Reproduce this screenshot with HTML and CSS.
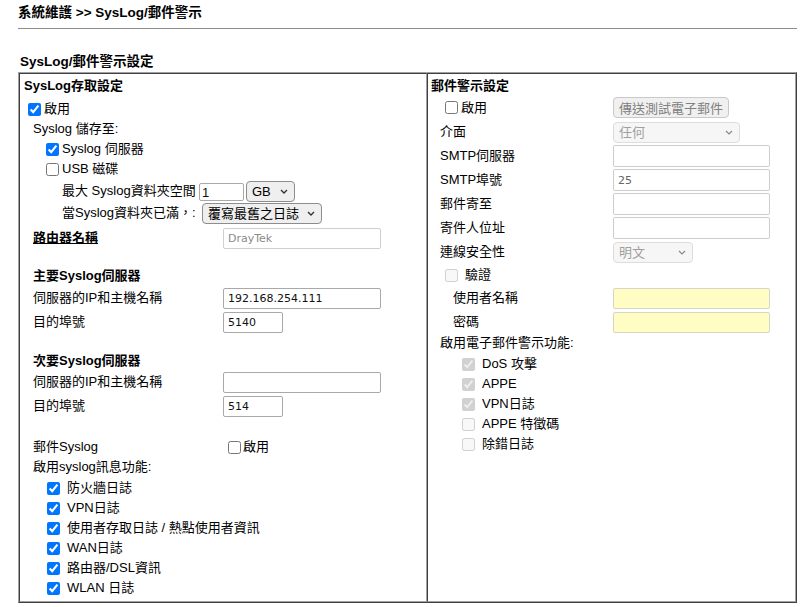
FILE: index.html
```html
<!DOCTYPE html>
<html lang="zh-Hant">
<head>
<meta charset="utf-8">
<title>SysLog/郵件警示</title>
<link rel="stylesheet" href="styles.css">
</head>
<body>
<div class="page">
  <div class="crumb">系統維護 &gt;&gt; SysLog/郵件警示</div>
  <div class="rule"></div>
  <div class="sect-title">SysLog/郵件警示設定</div>
  <div class="panel">
    <div class="cell cell-left">
      <div class="row h mt2">SysLog存取設定</div>
      <div class="row mt3"><input type="checkbox" class="cb" checked>啟用</div>
      <div class="row ind9">Syslog 儲存至:</div>
      <div class="row ind18"><input type="checkbox" class="cb" checked>Syslog 伺服器</div>
      <div class="row ind18"><input type="checkbox" class="cb">USB 磁碟</div>
      <div class="row tall mt1 ind38">
        <span class="lbl-max">最大 Syslog資料夾空間</span>
        <input type="text" class="in in-small" value="1">
        <span class="sel sel-gb"><select class="s"><option>GB</option></select><svg class="chev" width="8" height="5" viewBox="0 0 8 5"><polyline points="1,1 4,4 7,1" fill="none" stroke="#333" stroke-width="1.4"/></svg></span>
      </div>
      <div class="row tall ind38">
        <span class="lbl-full">當Syslog資料夾已滿，:</span>
        <span class="sel sel-over"><select class="s"><option>覆寫最舊之日誌</option></select><svg class="chev" width="8" height="5" viewBox="0 0 8 5"><polyline points="1,1 4,4 7,1" fill="none" stroke="#333" stroke-width="1.4"/></svg></span>
      </div>
      <div class="row tall mt3 ind9">
        <span class="lbl h u">路由器名稱</span>
        <input type="text" class="in in-wide in-dis" value="DrayTek" disabled>
      </div>
      <div class="row h mt17 ind9">主要Syslog伺服器</div>
      <div class="row tall mt1 ind9">
        <span class="lbl">伺服器的IP和主機名稱</span>
        <input type="text" class="in in-wide" value="192.168.254.111">
      </div>
      <div class="row tall mt2 ind9">
        <span class="lbl">目的埠號</span>
        <input type="text" class="in in-port" value="5140">
      </div>
      <div class="row h mt18 ind9">次要Syslog伺服器</div>
      <div class="row tall ind9">
        <span class="lbl">伺服器的IP和主機名稱</span>
        <input type="text" class="in in-wide" value="">
      </div>
      <div class="row tall mt2 ind9">
        <span class="lbl">目的埠號</span>
        <input type="text" class="in in-port" value="514">
      </div>
      <div class="row mt20 ind9">
        <span class="lbl">郵件Syslog</span>
        <input type="checkbox" class="cb cb-mail">啟用
      </div>
      <div class="row ind9">啟用syslog訊息功能:</div>
      <div class="row mt1 ind19"><input type="checkbox" class="cb cb-gap" checked>防火牆日誌</div>
      <div class="row ind19"><input type="checkbox" class="cb cb-gap" checked>VPN日誌</div>
      <div class="row ind19"><input type="checkbox" class="cb cb-gap" checked>使用者存取日誌 / 熱點使用者資訊</div>
      <div class="row ind19"><input type="checkbox" class="cb cb-gap" checked>WAN日誌</div>
      <div class="row ind19"><input type="checkbox" class="cb cb-gap" checked>路由器/DSL資訊</div>
      <div class="row ind19"><input type="checkbox" class="cb cb-gap" checked>WLAN 日誌</div>
    </div>
    <div class="cell cell-right">
      <div class="row h mt2">郵件警示設定</div>
      <div class="row row21 mt1 ind10">
        <span class="lbl-en"><input type="checkbox" class="cb">啟用</span>
        <button class="btn" type="button" disabled>傳送測試電子郵件</button>
      </div>
      <div class="row tall mt3 ind9">
        <span class="rlbl">介面</span>
        <span class="sel sel-if dis"><select class="s" disabled><option>任何</option></select><svg class="chev" width="8" height="5" viewBox="0 0 8 5"><polyline points="1,1 4,4 7,1" fill="none" stroke="#888" stroke-width="1.2"/></svg></span>
      </div>
      <div class="row tall mt2 ind9">
        <span class="rlbl">SMTP伺服器</span>
        <input type="text" class="in in-r" value="">
      </div>
      <div class="row tall mt2 ind9">
        <span class="rlbl">SMTP埠號</span>
        <input type="text" class="in in-r in-grey" value="25">
      </div>
      <div class="row tall mt2 ind9">
        <span class="rlbl">郵件寄至</span>
        <input type="text" class="in in-r" value="">
      </div>
      <div class="row tall mt2 ind9">
        <span class="rlbl">寄件人位址</span>
        <input type="text" class="in in-r" value="">
      </div>
      <div class="row tall mt2 ind9">
        <span class="rlbl">連線安全性</span>
        <span class="sel sel-sec dis"><select class="s" disabled><option>明文</option></select><svg class="chev" width="8" height="5" viewBox="0 0 8 5"><polyline points="1,1 4,4 7,1" fill="none" stroke="#888" stroke-width="1.2"/></svg></span>
      </div>
      <div class="row mt2 ind10"><input type="checkbox" class="cb cb-gap" disabled>驗證</div>
      <div class="row tall mt2 ind22">
        <span class="rlbl2">使用者名稱</span>
        <input type="text" class="in in-r in-yel" value="">
      </div>
      <div class="row tall mt2 ind22">
        <span class="rlbl2">密碼</span>
        <input type="password" class="in in-r in-yel" value="">
      </div>
      <div class="row ind9">啟用電子郵件警示功能:</div>
      <div class="row mt1 ind27"><input type="checkbox" class="cb cb-gap" checked disabled>DoS 攻擊</div>
      <div class="row ind27"><input type="checkbox" class="cb cb-gap" checked disabled>APPE</div>
      <div class="row ind27"><input type="checkbox" class="cb cb-gap" checked disabled>VPN日誌</div>
      <div class="row ind27"><input type="checkbox" class="cb cb-gap" disabled>APPE 特徵碼</div>
      <div class="row ind27"><input type="checkbox" class="cb cb-gap" disabled>除錯日誌</div>
    </div>
  </div>
</div>
</body>
</html>
```
FILE: styles.css
```css
body {
  margin: 0;
  font-family: "Liberation Sans", "Noto Sans CJK TC", sans-serif;
  font-size: 13px;
  color: #000;
  background: #fff;
}

.page {
  width: 779px;
  margin-left: 18px;
}

.crumb {
  height: 28px;
  line-height: 26px;
  font-weight: bold;
  font-size: 13.5px;
}

.rule {
  height: 1px;
  background: #8c8c8c;
}

.sect-title {
  margin-top: 23px;
  height: 20px;
  line-height: 20px;
  padding-left: 2px;
  font-weight: bold;
  font-size: 13.5px;
}

.panel {
  display: grid;
  grid-template-columns: 408px 369px;
  border: 1px solid;
  border-color: #a0a0a0 #404040 #404040 #a0a0a0;
}

.cell {
  border: 1px solid;
  border-color: #404040 #a0a0a0 #a0a0a0 #404040;
  padding: 0 0 3px 4px;
}

.cell-right {
  padding-left: 3px;
}

.row {
  display: flex;
  align-items: center;
  height: 20px;
  line-height: 20px;
  white-space: nowrap;
}

.row.tall { height: 22px; }
.row.row21 { height: 21px; }

.h { font-weight: bold; }
.u { text-decoration: underline; }

.mt1 { margin-top: 1px; }
.mt2 { margin-top: 2px; }
.mt3 { margin-top: 3px; }
.mt17 { margin-top: 17px; }
.mt18 { margin-top: 18px; }
.mt20 { margin-top: 20px; }

.ind9 { padding-left: 9px; }
.ind10 { padding-left: 10px; }
.ind18 { padding-left: 18px; }
.ind19 { padding-left: 19px; }
.ind22 { padding-left: 22px; }
.ind27 { padding-left: 27px; }
.ind38 { padding-left: 38px; }

.cb {
  width: 13px;
  height: 13px;
  margin: 0 3px 0 4px;
  flex: none;
}

.cb-gap { margin-right: 7px; }
.cb-mail { margin-left: 5px; margin-right: 2px; }

.lbl { width: 190px; flex: none; }
.lbl-max { width: 137px; flex: none; }
.lbl-full { width: 140px; flex: none; }
.rlbl { width: 173px; flex: none; }
.rlbl2 { width: 160px; flex: none; }
.lbl-en { width: 172px; flex: none; display: flex; align-items: center; }

.in {
  box-sizing: border-box;
  height: 21px;
  border: 1px solid #a9a9a9;
  border-radius: 2px;
  padding: 0 0 0 4px;
  font-family: "DejaVu Sans", sans-serif;
  font-size: 11px;
  color: #111;
  background: #fff;
  outline: none;
}

.in-wide { width: 158px; }
.in-port { width: 60px; }
.in-small {
  width: 45px;
  height: 18px;
  margin-top: 2px;
  padding-left: 2px;
  font-family: "Liberation Sans", sans-serif;
  font-size: 13px;
}
.in-dis { border-color: #cfcfcf; color: #8a8a8a; background: #fff; }
.in-r { width: 157px; height: 22px; border-color: #cdcdcd; }
.in-grey { color: #666; }
.in-yel { height: 21px; background: #fffcc4; border-color: #d6d6c8; }

.sel {
  position: relative;
  display: inline-flex;
  flex: none;
}

.s {
  appearance: none;
  -webkit-appearance: none;
  box-sizing: border-box;
  height: 21px;
  border: 1px solid #8d8d8d;
  border-radius: 4px;
  background: #efefef;
  font-family: "Liberation Sans", "Noto Sans CJK TC", sans-serif;
  font-size: 13px;
  color: #000;
  padding: 0 0 0 5px;
  margin: 0;
  outline: none;
}

.chev {
  position: absolute;
  right: 7px;
  top: 8px;
  pointer-events: none;
}

.sel-gb { margin-left: 2px; }
.sel-gb .s { width: 49px; }
.sel-over .s { width: 120px; }
.sel-if .s { width: 127px; }
.sel-sec .s { width: 80px; }

.sel.dis .s {
  background: #f3f3f3;
  border-color: #cfcfcf;
  color: #777;
}

.btn {
  box-sizing: border-box;
  height: 21px;
  width: 116px;
  padding: 0;
  border: 1px solid #c9c9c9;
  border-radius: 4px;
  background: #f0f0f0;
  color: #808080;
  font-family: "Liberation Sans", "Noto Sans CJK TC", sans-serif;
  font-size: 13px;
  flex: none;
}
```
